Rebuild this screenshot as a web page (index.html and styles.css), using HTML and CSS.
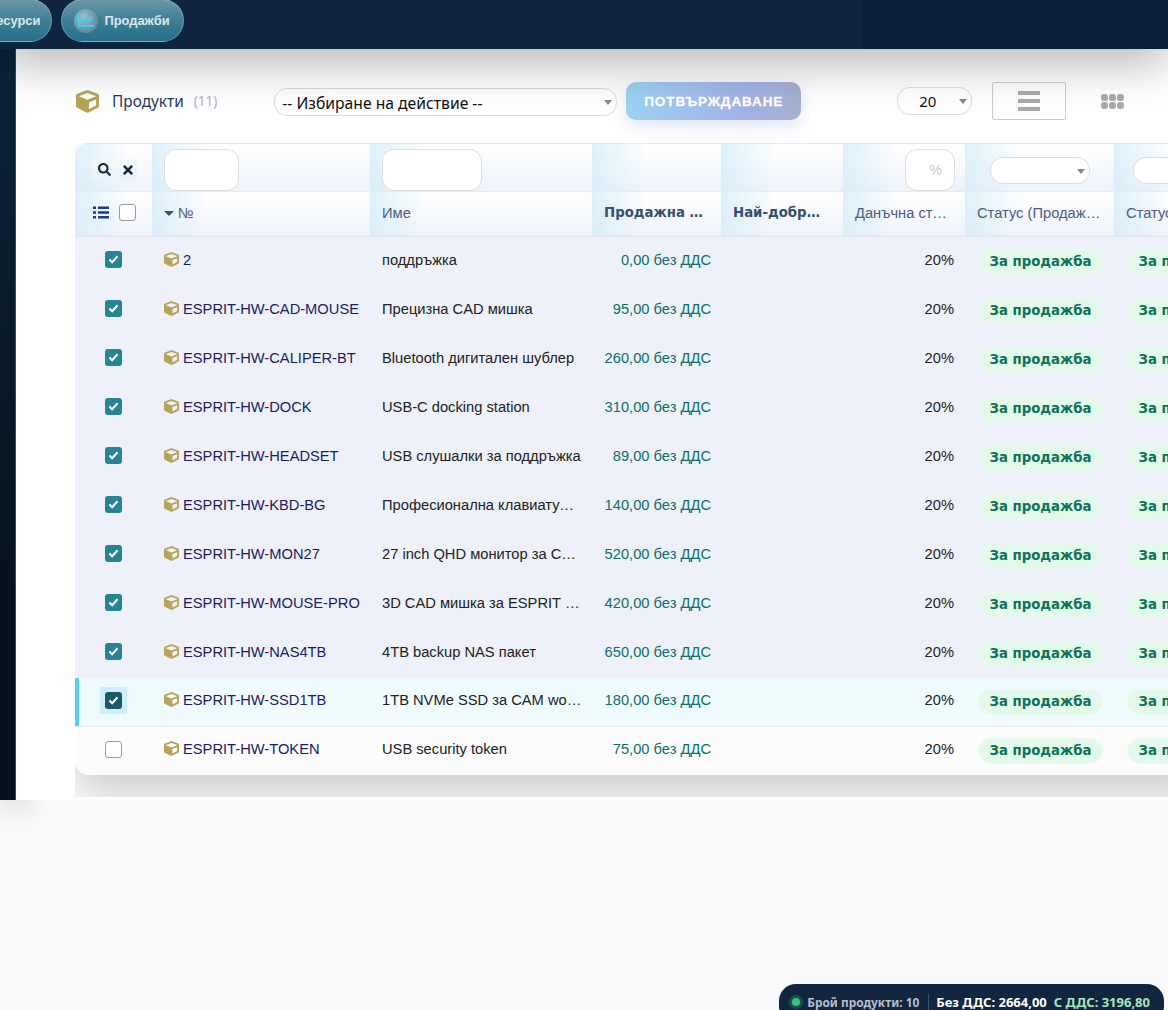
FILE: index.html
```html
<!DOCTYPE html>
<html lang="bg">
<head>
  <meta charset="UTF-8">
  <meta name="viewport" content="width=device-width, initial-scale=1.0">
  <title>Продукти</title>
  <link rel="stylesheet" href="styles.css">
</head>
<body>
  <header class="topbar">
    <nav class="top-nav">
      <a class="pill pill-cut">Ресурси</a>
      <a class="pill">
        <span class="pill-icon">
          <svg viewBox="0 0 20 16" width="18" height="15"><path d="M2 1v13h17" fill="none" stroke="#3fd2ec" stroke-width="2"/><path d="M4 11l4-4 3 2 6-5" fill="none" stroke="#3fd2ec" stroke-width="2"/></svg>
        </span>
        Продажби
      </a>
    </nav>
    <div class="top-right"></div>
  </header>

  <div class="layout">
    <aside class="sidebar"></aside>
    <main class="content">
      <div class="toolbar">
        <svg class="cube cube-title" viewBox="0 0 512 512"><use href="#cube"/></svg>
        <span class="page-title">Продукти</span>
        <span class="page-count">(11)</span>
        <div class="select-wrap action-select"><select><option>-- Избиране на действие --</option></select></div>
        <button class="confirm-btn">ПОТВЪРЖДАВАНЕ</button>
        <div class="select-wrap limit-select"><select><option>20</option></select></div>
        <button class="view-btn"><span></span><span></span><span></span></button>
        <div class="grid-icon"><i></i><i></i><i></i><i></i><i></i><i></i></div>
      </div>

      <div class="table-wrap">
        <table class="list">
          <colgroup>
            <col class="c-select"><col class="c-ref"><col class="c-name"><col class="c-price"><col class="c-best"><col class="c-tax"><col class="c-status"><col class="c-status2">
          </colgroup>
          <thead>
            <tr class="filters">
              <th>
                <div class="filter-btns">
                  <span class="filter-btn btn-search"><svg viewBox="0 0 512 512" width="13" height="13"><path d="M505 442.7L405.3 343c-4.5-4.5-10.6-7-17-7H372c27.6-35.3 44-79.7 44-128C416 93.1 322.9 0 208 0S0 93.1 0 208s93.1 208 208 208c48.3 0 92.7-16.4 128-44v16.3c0 6.4 2.5 12.5 7 17l99.7 99.7c9.4 9.4 24.6 9.4 33.9 0l28.3-28.3c9.4-9.4 9.4-24.6.1-34zM208 336c-70.7 0-128-57.2-128-128 0-70.7 57.2-128 128-128 70.7 0 128 57.2 128 128 0 70.7-57.2 128-128 128z"/></svg></span>
                  <span class="filter-btn btn-clear"><svg viewBox="0 0 352 512" width="10" height="14"><path d="M242.72 256l100.07-100.07c12.28-12.28 12.28-32.19 0-44.48l-22.24-22.24c-12.28-12.28-32.19-12.28-44.48 0L176 189.28 75.93 89.21c-12.28-12.28-32.19-12.28-44.48 0L9.21 111.45c-12.28 12.28-12.28 32.19 0 44.48L109.28 256 9.21 356.07c-12.28 12.28-12.28 32.19 0 44.48l22.24 22.24c12.28 12.28 32.2 12.28 44.48 0L176 322.72l100.07 100.07c12.28 12.28 32.2 12.28 44.48 0l22.24-22.24c12.28-12.28 12.28-32.19 0-44.48L242.72 256z"/></svg></span>
                </div>
              </th>
              <th><input class="filter-input w-ref" type="text"></th>
              <th><input class="filter-input w-name" type="text"></th>
              <th></th>
              <th></th>
              <th class="right"><input class="filter-input w-tax" type="text" placeholder="%"></th>
              <th><div class="select-wrap filter-select"><select></select></div></th>
              <th><div class="select-wrap filter-select filter-select-2"><select></select></div></th>
            </tr>
            <tr class="labels">
              <th class="select-head">
                <svg class="list-icon" viewBox="0 0 16 13" width="16" height="13"><path d="M0 .5h3v2.6H0zM5 .5h11v2.6H5zM0 5.2h3v2.6H0zM5 5.2h11v2.6H5zM0 9.9h3v2.6H0zM5 9.9h11v2.6H5z"/></svg>
                <span class="check"></span>
              </th>
              <th class="ref-head"><span class="sort-arrow"></span>№</th>
              <th>Име</th>
              <th class="strong">Продажна цена</th>
              <th class="strong">Най-добра цена</th>
              <th>Данъчна ставка</th>
              <th>Статус (Продажба)</th>
              <th>Статус (Покупка)</th>
            </tr>
          </thead>
          <tbody id="rows"></tbody>
        </table>
      </div>
    </main>
  </div>

  <div class="totals">
    <span class="dot"></span>
    <span class="totals-count">Брой продукти: 10</span>
    <span class="totals-net">Без ДДС: 2664,00</span>
    <span class="totals-gross">С ДДС: 3196,80</span>
  </div>

  <svg class="defs" width="0" height="0">
    <symbol id="cube" viewBox="0 0 512 512"><path d="M239.1 6.3l-208 78c-18.7 7-31.1 25-31.1 45v225.1c0 18.2 10.3 34.8 26.5 42.9l208 104c13.5 6.8 29.4 6.8 42.9 0l208-104c16.3-8.1 26.5-24.8 26.5-42.9V129.3c0-20-12.4-37.9-31.1-44.9l-208-78C262 2.2 250 2.2 239.1 6.3zM256 68.4l192 72v1.1l-192 78-192-78v-1.1l192-72zm32 356V275.5l160-65v133.9l-160 80z"/></symbol>
  </svg>

  <script>
    const products = [
      ['2', 'поддръжка', '0,00'],
      ['ESPRIT-HW-CAD-MOUSE', 'Прецизна CAD мишка', '95,00'],
      ['ESPRIT-HW-CALIPER-BT', 'Bluetooth дигитален шублер', '260,00'],
      ['ESPRIT-HW-DOCK', 'USB-C docking station', '310,00'],
      ['ESPRIT-HW-HEADSET', 'USB слушалки за поддръжка', '89,00'],
      ['ESPRIT-HW-KBD-BG', 'Професионална клавиатура BG', '140,00'],
      ['ESPRIT-HW-MON27', '27 inch QHD монитор за CAD работа', '520,00'],
      ['ESPRIT-HW-MOUSE-PRO', '3D CAD мишка за ESPRIT работа', '420,00'],
      ['ESPRIT-HW-NAS4TB', '4TB backup NAS пакет', '650,00'],
      ['ESPRIT-HW-SSD1TB', '1TB NVMe SSD за CAM workstation', '180,00'],
      ['ESPRIT-HW-TOKEN', 'USB security token', '75,00']
    ];

    const checkMark = '<svg viewBox="0 0 12 10" width="11" height="9"><path d="M1.5 5l3 3 6-6.5" fill="none" stroke="#fff" stroke-width="2.4"/></svg>';

    document.getElementById('rows').innerHTML = products.map((p, i) => {
      const cls = i === 9 ? 'row-active' : i === 10 ? 'row-plain' : 'row-selected';
      const box = i === 10 ? '<span class="check"></span>' : `<span class="check on">${checkMark}</span>`;
      return `<tr class="${cls}">
        <td class="cell-check"><span class="check-holder">${box}</span></td>
        <td class="cell-ref"><svg class="cube" viewBox="0 0 512 512"><use href="#cube"/></svg>${p[0]}</td>
        <td class="cell-name">${p[1]}</td>
        <td class="cell-price">${p[2]} без ДДС</td>
        <td></td>
        <td class="cell-tax">20%</td>
        <td class="cell-badge"><span class="badge">За продажба</span></td>
        <td class="cell-badge"><span class="badge">За продажба</span></td>
      </tr>`;
    }).join('');
  </script>
</body>
</html>
```

FILE: styles.css
```css
html, body {
  height: 100%;
}

body {
  margin: 0;
  overflow: hidden;
  background: #f8f9fb;
  font-family: 'Liberation Sans', Arial, sans-serif;
  font-size: 14.7px;
  color: #222;
}

.defs {
  display: block;
}

/* top bar */
.topbar {
  display: flex;
  height: 49px;
  background: #0e2440;
  box-shadow: 0 10px 50px rgba(0, 0, 0, 0.35);
  position: relative;
  z-index: 2;
}

.top-nav {
  flex: 1;
  display: flex;
  gap: 9px;
  margin-left: -53px;
  margin-top: -1px;
}

.top-right {
  width: 306px;
  background: #0a1f3a;
}

.pill {
  display: flex;
  align-items: center;
  gap: 6px;
  height: 43px;
  box-sizing: border-box;
  padding: 0 13px 0 12px;
  border: 1px solid rgba(255, 255, 255, 0.22);
  border-radius: 22px;
  background: linear-gradient(180deg, #6b97a8, #3f7f95 50%, #24708a);
  color: #dbe8ee;
  font-weight: bold;
  font-size: 12.9px;
}

.pill-cut {
  padding: 0 11px 0 40px;
}

.pill-icon {
  display: flex;
  align-items: center;
  justify-content: center;
  width: 24px;
  height: 24px;
  border-radius: 50%;
  background: radial-gradient(circle at 40% 35%, #9cc0cc, #3f7a92);
}

/* layout */
.layout {
  display: flex;
  height: 751px;
}

.sidebar {
  width: 16px;
  box-sizing: border-box;
  border-right: 1px solid #3a4a58;
  background: linear-gradient(180deg, #0a2338, #06121f 70%, #06111e);
  box-shadow: 8px 10px 30px rgba(0, 0, 0, 0.2);
}

.content {
  flex: 1;
  min-width: 0;
  background: #fff;
  padding-left: 59px;
}

/* toolbar */
.toolbar {
  display: flex;
  align-items: center;
  height: 38px;
  padding-top: 33px;
  margin-bottom: 23px;
}

.cube {
  width: 15px;
  height: 15px;
  fill: #b7a458;
  margin-right: 4px;
  flex: none;
  vertical-align: -2px;
}

.cube-title {
  width: 23px;
  height: 23px;
  margin: 0 13px 0 1px;
}

.page-title {
  font-family: 'Noto Sans', sans-serif;
  color: #1f3a5c;
  font-size: 15.4px;
}

.page-count {
  font-family: 'Noto Sans', sans-serif;
  color: #a9b8ca;
  margin-left: 10px;
  font-size: 13.5px;
}

.select-wrap {
  position: relative;
}

.select-wrap select {
  display: block;
  width: 100%;
  height: 100%;
  appearance: none;
  background: #fff;
  border: 1px solid #dcdcdc;
  border-radius: 13px;
  padding: 0 0 0 7px;
  font-family: 'Noto Sans', sans-serif;
  font-size: 15px;
  color: #111;
}

.select-wrap::after {
  content: '';
  position: absolute;
  right: 5px;
  top: 50%;
  margin-top: -2px;
  border-left: 4px solid transparent;
  border-right: 4px solid transparent;
  border-top: 5px solid #888;
}

.action-select {
  width: 343px;
  height: 28px;
  margin: 2px 0 0 57px;
}

.action-select select {
  font-size: 15.7px;
  padding-top: 2px;
}

.confirm-btn {
  width: 175px;
  height: 38px;
  margin-left: 9px;
  border: none;
  border-radius: 10px;
  background: linear-gradient(100deg, #9dd3f3, #a2b2e8 65%, #a5b0cc);
  box-shadow: 0 6px 18px rgba(120, 150, 220, 0.25);
  color: #fff;
  font-family: 'Liberation Sans', sans-serif;
  font-size: 13.5px;
  font-weight: bold;
  letter-spacing: 0.9px;
  -webkit-text-stroke: 0.3px #fff;
}

.limit-select {
  width: 75px;
  height: 28px;
  margin-left: 96px;
}

.limit-select select {
  padding-left: 21px;
}

.view-btn {
  display: flex;
  flex-direction: column;
  align-items: center;
  justify-content: center;
  gap: 4px;
  width: 74px;
  height: 38px;
  margin-left: 20px;
  padding: 0;
  background: #fff;
  border: 1px solid #ccc;
  border-radius: 2px;
}

.view-btn span {
  width: 22px;
  height: 4px;
  background: #aaa;
}

.grid-icon {
  display: grid;
  grid-template-columns: repeat(3, 7px);
  gap: 1px;
  margin-left: 35px;
}

.grid-icon i {
  width: 7px;
  height: 7px;
  border-radius: 3px;
  background: #aaa;
}

/* table */
.table-wrap {
  width: 1100px;
  height: 654px;
  overflow: hidden;
  background: #fff;
}

.list {
  width: 1130px;
  table-layout: fixed;
  border-collapse: separate;
  border-spacing: 0;
  border-radius: 14px 0 0 14px;
  background: #fff;
  box-shadow: 0 20px 40px rgba(0, 0, 0, 0.2);
  overflow: hidden;
}

.c-select { width: 77px; }
.c-ref { width: 218px; }
.c-name { width: 222px; }
.c-price { width: 129px; }
.c-best { width: 122px; }
.c-tax { width: 122px; }
.c-status { width: 149px; }
.c-status2 { width: 91px; }

.list th {
  background:
    linear-gradient(100deg, rgba(200, 232, 246, 0.6), rgba(200, 232, 246, 0) 56px),
    linear-gradient(180deg, #fff, #eef3fb);
  padding: 0 12px;
  text-align: left;
  font-weight: normal;
}

.filters th {
  height: 49px;
  vertical-align: bottom;
  border-top: 1px solid #e6e6e6;
  border-bottom: 1px solid #e6ebf0;
  box-sizing: border-box;
}

.filters th.right {
  text-align: right;
  padding-right: 10px;
}

.filter-btns {
  display: flex;
  justify-content: flex-end;
  margin: 0 2px 11px 0;
}

.filter-btn {
  display: flex;
  align-items: center;
  justify-content: center;
  height: 21px;
  background: linear-gradient(180deg, #f4f9fc, #eaf3f9);
  fill: #0e2a45;
}

.btn-search {
  width: 25px;
}

.btn-clear {
  width: 20px;
  margin-left: 1px;
}

.filter-input {
  display: block;
  box-sizing: border-box;
  height: 42px;
  background: #fff;
  border: 1px solid #dedede;
  border-radius: 12px;
  text-align: right;
}

.filter-input::placeholder {
  color: #ccc;
  font-size: 14px;
}

.w-ref { width: 75px; }
.w-name { width: 100px; }
.w-tax {
  width: 50px;
  padding-right: 12px;
  margin-left: auto;
}

.filter-select {
  width: 100px;
  height: 27px;
  margin: 0 0 7px 13px;
}

.filter-select-2 {
  margin-left: 7px;
}

.labels th {
  height: 45px;
  box-sizing: border-box;
  border-bottom: 1px solid #e4e8ee;
  color: #4b5c86;
  white-space: nowrap;
  overflow: hidden;
  text-overflow: ellipsis;
  padding-bottom: 3px;
}

.labels th.strong {
  font-family: 'DejaVu Sans', sans-serif;
  font-weight: bold;
  font-size: 13.3px;
  color: #34506e;
  padding-right: 15px;
}

.select-head {
  text-align: right;
}

.list-icon {
  fill: #1e3a8a;
  margin: 0 6px 0 6px;
  vertical-align: -2px;
}

.sort-arrow {
  display: inline-block;
  border-left: 5px solid transparent;
  border-right: 5px solid transparent;
  border-top: 5px solid #3a5070;
  margin-right: 4px;
  vertical-align: 2px;
}

.check {
  display: inline-flex;
  align-items: center;
  justify-content: center;
  box-sizing: border-box;
  width: 17px;
  height: 17px;
  border: 1.5px solid #999;
  border-radius: 3px;
  background: #fff;
  vertical-align: middle;
}

.check.on {
  background: #258595;
  border: none;
}

.list td {
  height: 49px;
  box-sizing: border-box;
  padding: 0 11px 4px 12px;
  white-space: nowrap;
  overflow: hidden;
  text-overflow: ellipsis;
}

.row-selected td {
  background: #eef1f9;
}

.row-active td {
  background: #f0fbfe;
  border-bottom: 1px solid #e8edf0;
}

.row-active .cell-check {
  box-shadow: inset 4px 0 0 #5bcbf0;
}

.row-active .check.on {
  background: #1c5a68;
}

.row-active .check-holder {
  background: #d0effa;
}

.list .row-plain td {
  height: 48px;
  background: #fcfcfc;
}

.list td.cell-check {
  padding: 0 0 4px 25px;
}

.check-holder {
  display: inline-flex;
  align-items: center;
  justify-content: center;
  width: 27px;
  height: 27px;
}

.list td.cell-ref {
  color: #1b1b66;
  padding-right: 4px;
}

.list td.cell-name {
  color: #222;
  padding-right: 10px;
}

.list td.cell-price {
  color: #0d6f68;
  text-align: right;
  padding-right: 10px;
}

.cell-tax {
  text-align: right;
}

.list td.cell-badge {
  padding: 0 0 0 13px;
}

.badge {
  display: inline-block;
  box-sizing: border-box;
  width: 125px;
  height: 26px;
  line-height: 24px;
  text-align: center;
  border: 1px solid #eafcf0;
  border-radius: 13px;
  background: #e3faea;
  color: #0d7358;
  font-family: 'DejaVu Sans', sans-serif;
  font-weight: bold;
  font-size: 13.3px;
}

/* totals */
.totals {
  position: fixed;
  right: 4px;
  bottom: -14px;
  display: flex;
  align-items: center;
  height: 40px;
  padding: 0 14px 4px 13px;
  box-sizing: border-box;
  border-radius: 17px;
  background: #12263f;
  font-family: 'Noto Sans', sans-serif;
  font-weight: bold;
  font-size: 13px;
  color: #fff;
  white-space: nowrap;
}

.dot {
  width: 8px;
  height: 8px;
  border-radius: 50%;
  background: #33c77a;
  box-shadow: 0 0 0 3px rgba(51, 199, 122, 0.25);
  margin-right: 7px;
}

.totals-count {
  color: #b5bfca;
  font-size: 11.9px;
  padding-right: 9px;
  margin-right: 7px;
  border-right: 1px solid #3c4f66;
}

.totals-gross {
  color: #a5e6bd;
  margin-left: 7px;
}
```
